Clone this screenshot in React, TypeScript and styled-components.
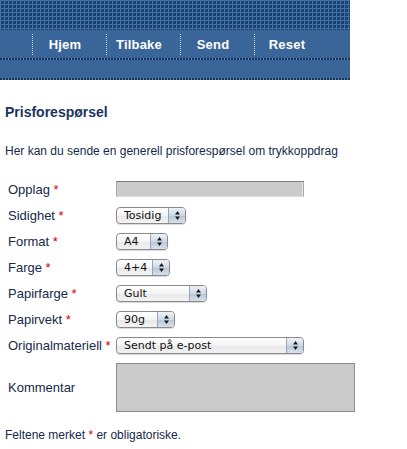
import React from 'react'
import styled, { createGlobalStyle } from 'styled-components'

const GlobalStyle = createGlobalStyle`
  body {
    margin: 0;
    background: #fff;
    font-family: 'Liberation Sans', Arial, sans-serif;
  }
`

const Header = styled.header`
  width: 350px;
`
const GridBand = styled.div`
  height: 30px;
  background-color: #1b4274;
  background-image:
    linear-gradient(90deg, #4570a2 1px, transparent 1px),
    linear-gradient(#4570a2 1px, transparent 1px);
  background-size: 4px 4px;
`
const Nav = styled.nav`
  height: 28px;
  background: #3a6598;
  display: flex;
  align-items: center;
  padding-left: 32px;
`
const NavItem = styled.a`
  width: 74px;
  height: 21px;
  box-sizing: border-box;
  border-left: 1px dotted #c8d5e6;
  padding-right: 9px;
  display: flex;
  align-items: center;
  justify-content: center;
  color: #fff;
  font-weight: 700;
  font-size: 13px;
  letter-spacing: 0.2px;
  text-decoration: none;
`
const Rule = styled.div`
  height: 2px;
  background: repeating-linear-gradient(90deg, #17355f 0 2px, #5a7fab 2px 3px);
`
const SubBar = styled.div`
  height: 18px;
  background: #3a6598;
`

const Main = styled.main`
  padding: 0 5px;
  color: #16294c;
`
const Title = styled.h2`
  margin: 24px 0 0;
  font-size: 14px;
  line-height: 16px;
  font-weight: 700;
  color: #1b3461;
`
const Intro = styled.p`
  margin: 24px 0 0;
  font-size: 12px;
  line-height: 15px;
`
const Form = styled.form`
  margin-top: 17px;
  padding-left: 3px;
  display: grid;
  grid-template-columns: 108px 1fr;
  grid-template-rows: repeat(7, 26px) auto;
  align-items: center;
`
const Label = styled.label`
  font-size: 13px;
  color: #16294c;
`
const Star = styled.span`
  color: #d40000;
`
const TextInput = styled.input`
  width: 188px;
  height: 16px;
  box-sizing: border-box;
  margin: 0;
  padding: 0;
  background: #cbcbcb;
  border: 1px solid #a9a9a9;
  border-top-color: #7c7c7c;
  border-bottom-color: #dcdcdc;
  box-shadow: inset -1px 0 0 #e6e6e6;
`
const SelectBox = styled.div<{ $w: number }>`
  width: ${({ $w }) => $w}px;
  height: 17px;
  box-sizing: border-box;
  border: 1px solid #8a8a8a;
  border-radius: 4px;
  background: linear-gradient(#ffffff, #f4f4f4 50%, #e7e7e7 51%, #f3f3f3);
  box-shadow: 0 1px 1px rgba(0, 0, 0, 0.15);
  display: flex;
  overflow: hidden;
`
const Select = styled.select`
  appearance: none;
  flex: 1;
  min-width: 0;
  height: 100%;
  margin: 0;
  padding: 0 0 0 7px;
  border: 0;
  background: transparent;
  font: 11px 'DejaVu Sans', sans-serif;
  color: #111;
  outline: none;
`
const Cap = styled.span`
  width: 16px;
  border-left: 1px solid #9aa6b4;
  background: linear-gradient(#eef2f7, #cdd8e5 50%, #b6c5d7 51%, #d8e1ec);
  display: flex;
  align-items: center;
  justify-content: center;
`
const CommentLabel = styled(Label)`
  margin-top: 5px;
`
const TextArea = styled.textarea`
  width: 239px;
  height: 49px;
  box-sizing: border-box;
  margin: 5px 0 0;
  display: block;
  background: #cbcbcb;
  border: 1px solid #8c8c8c;
  resize: none;
`
const Note = styled.p`
  margin: 16px 0 0;
  font-size: 12px;
  line-height: 15px;
`

const Arrows = () => (
  <svg width='7' height='11' viewBox='0 0 7 11'>
    <path d='M3.5 1 L6 4.5 L1 4.5 Z M1 6.5 L6 6.5 L3.5 10 Z' fill='#1a1a1a' />
  </svg>
)

const Dropdown: React.FC<{ width: number, options: string[] }> = ({ width, options }) => (
  <SelectBox $w={width}>
    <Select defaultValue={options[0]}>
      {options.map(o => <option key={o}>{o}</option>)}
    </Select>
    <Cap><Arrows /></Cap>
  </SelectBox>
)

const menu = ['Hjem', 'Tilbake', 'Send', 'Reset']

const selects: { label: string, width: number, options: string[] }[] = [
  { label: 'Sidighet', width: 70, options: ['Tosidig', 'Ensidig'] },
  { label: 'Format', width: 52, options: ['A4', 'A3', 'A5'] },
  { label: 'Farge', width: 54, options: ['4+4', '4+0', '1+1'] },
  { label: 'Papirfarge', width: 91, options: ['Gult', 'Hvitt'] },
  { label: 'Papirvekt', width: 59, options: ['90g', '80g', '120g'] },
  { label: 'Originalmateriell', width: 188, options: ['Sendt på e-post', 'Sendt i posten'] }
]

const App: React.FC = () => {
  return (
    <>
      <GlobalStyle />
      <Header>
        <GridBand />
        <Nav>
          {menu.map(m => <NavItem key={m} href='#'>{m}</NavItem>)}
        </Nav>
        <Rule />
        <SubBar />
        <Rule />
      </Header>
      <Main>
        <Title>Prisforespørsel</Title>
        <Intro>Her kan du sende en generell prisforespørsel om trykkoppdrag</Intro>
        <Form>
          <Label>Opplag <Star>*</Star></Label>
          <TextInput type='text' />
          {selects.map(s => (
            <React.Fragment key={s.label}>
              <Label>{s.label} <Star>*</Star></Label>
              <Dropdown width={s.width} options={s.options} />
            </React.Fragment>
          ))}
          <CommentLabel>Kommentar</CommentLabel>
          <TextArea />
        </Form>
        <Note>Feltene merket <Star>*</Star> er obligatoriske.</Note>
      </Main>
    </>
  )
}

export default App
